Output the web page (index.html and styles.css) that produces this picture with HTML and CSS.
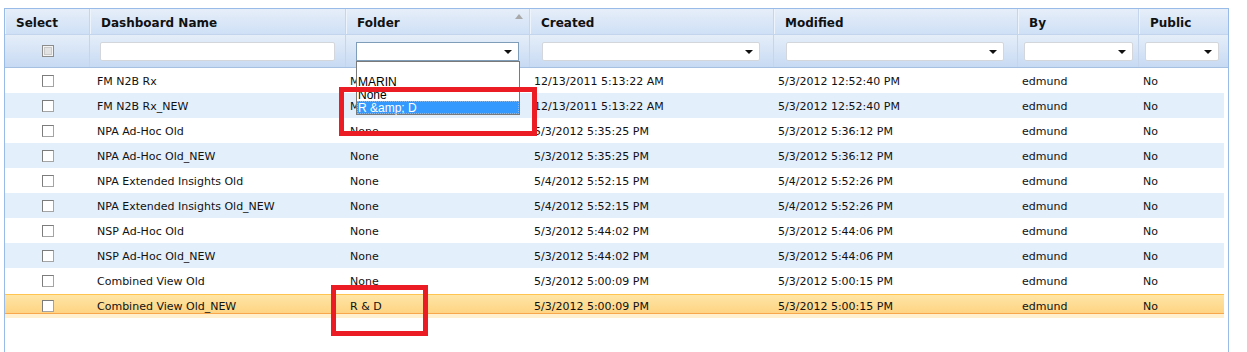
FILE: index.html
```html
<!DOCTYPE html>
<html lang="en">
<head>
    <meta charset="UTF-8">
    <title>Dashboards</title>
    <link rel="stylesheet" href="styles.css">
</head>
<body>
    <div class="grid">
        <div class="grid-head">
            <div class="row head-row">
                <div class="hd">Select</div>
                <div class="hd">Dashboard Name</div>
                <div class="hd">Folder<span class="sort-arrow"></span></div>
                <div class="hd">Created</div>
                <div class="hd">Modified</div>
                <div class="hd">By</div>
                <div class="hd">Public</div>
            </div>
            <div class="row filter-row">
                <div class="ft ft-sel"><span class="chk chk-off"></span></div>
                <div class="ft ft-name"><input class="filter-text" type="text"></div>
                <div class="ft ft-folder"><div class="combo combo-open"><span class="combo-arrow"></span></div></div>
                <div class="ft ft-created"><div class="combo"><span class="combo-arrow"></span></div></div>
                <div class="ft ft-modified"><div class="combo"><span class="combo-arrow"></span></div></div>
                <div class="ft ft-by"><div class="combo"><span class="combo-arrow"></span></div></div>
                <div class="ft ft-public"><div class="combo"><span class="combo-arrow"></span></div></div>
            </div>
        </div>

        <div class="grid-body">
            <div class="row data-row">
                <div class="cell cell-sel"><span class="chk"></span></div>
                <div class="cell cell-name">FM N2B Rx</div>
                <div class="cell">MARIN</div>
                <div class="cell">12/13/2011 5:13:22 AM</div>
                <div class="cell">5/3/2012 12:52:40 PM</div>
                <div class="cell">edmund</div>
                <div class="cell">No</div>
            </div>
            <div class="row data-row alt">
                <div class="cell cell-sel"><span class="chk"></span></div>
                <div class="cell cell-name">FM N2B Rx_NEW</div>
                <div class="cell">MARIN</div>
                <div class="cell">12/13/2011 5:13:22 AM</div>
                <div class="cell">5/3/2012 12:52:40 PM</div>
                <div class="cell">edmund</div>
                <div class="cell">No</div>
            </div>
            <div class="row data-row">
                <div class="cell cell-sel"><span class="chk"></span></div>
                <div class="cell cell-name">NPA Ad-Hoc Old</div>
                <div class="cell">None</div>
                <div class="cell">5/3/2012 5:35:25 PM</div>
                <div class="cell">5/3/2012 5:36:12 PM</div>
                <div class="cell">edmund</div>
                <div class="cell">No</div>
            </div>
            <div class="row data-row alt">
                <div class="cell cell-sel"><span class="chk"></span></div>
                <div class="cell cell-name">NPA Ad-Hoc Old_NEW</div>
                <div class="cell">None</div>
                <div class="cell">5/3/2012 5:35:25 PM</div>
                <div class="cell">5/3/2012 5:36:12 PM</div>
                <div class="cell">edmund</div>
                <div class="cell">No</div>
            </div>
            <div class="row data-row">
                <div class="cell cell-sel"><span class="chk"></span></div>
                <div class="cell cell-name">NPA Extended Insights Old</div>
                <div class="cell">None</div>
                <div class="cell">5/4/2012 5:52:15 PM</div>
                <div class="cell">5/4/2012 5:52:26 PM</div>
                <div class="cell">edmund</div>
                <div class="cell">No</div>
            </div>
            <div class="row data-row alt">
                <div class="cell cell-sel"><span class="chk"></span></div>
                <div class="cell cell-name">NPA Extended Insights Old_NEW</div>
                <div class="cell">None</div>
                <div class="cell">5/4/2012 5:52:15 PM</div>
                <div class="cell">5/4/2012 5:52:26 PM</div>
                <div class="cell">edmund</div>
                <div class="cell">No</div>
            </div>
            <div class="row data-row">
                <div class="cell cell-sel"><span class="chk"></span></div>
                <div class="cell cell-name">NSP Ad-Hoc Old</div>
                <div class="cell">None</div>
                <div class="cell">5/3/2012 5:44:02 PM</div>
                <div class="cell">5/3/2012 5:44:06 PM</div>
                <div class="cell">edmund</div>
                <div class="cell">No</div>
            </div>
            <div class="row data-row alt">
                <div class="cell cell-sel"><span class="chk"></span></div>
                <div class="cell cell-name">NSP Ad-Hoc Old_NEW</div>
                <div class="cell">None</div>
                <div class="cell">5/3/2012 5:44:02 PM</div>
                <div class="cell">5/3/2012 5:44:06 PM</div>
                <div class="cell">edmund</div>
                <div class="cell">No</div>
            </div>
            <div class="row data-row">
                <div class="cell cell-sel"><span class="chk"></span></div>
                <div class="cell cell-name">Combined View Old</div>
                <div class="cell">None</div>
                <div class="cell">5/3/2012 5:00:09 PM</div>
                <div class="cell">5/3/2012 5:00:15 PM</div>
                <div class="cell">edmund</div>
                <div class="cell">No</div>
            </div>
            <div class="row data-row selected">
                <div class="cell cell-sel"><span class="chk"></span></div>
                <div class="cell cell-name">Combined View Old_NEW</div>
                <div class="cell">R &amp; D</div>
                <div class="cell">5/3/2012 5:00:09 PM</div>
                <div class="cell">5/3/2012 5:00:15 PM</div>
                <div class="cell">edmund</div>
                <div class="cell">No</div>
            </div>
        </div>

        <!-- open folder filter list -->
        <ul class="combo-list">
            <li>&nbsp;</li>
            <li>MARIN</li>
            <li>None</li>
            <li class="hot">R &amp;amp; D</li>
        </ul>

        <div class="mark mark-folder"></div>
        <div class="mark mark-rd"></div>
    </div>
</body>
</html>
```

FILE: styles.css
```css
body {
    margin: 0;
    background: #fff;
    font-family: "DejaVu Sans", Verdana, sans-serif;
}

.grid {
    position: relative;
    width: 1223px;
    margin: 8px 0 0 4px;
    border: 1px solid #99bbe8;
    border-bottom: 0;
    height: 360px;
}

.row {
    display: grid;
    grid-template-columns: 85px 256px 184px 244px 244px 121px 89px;
}

.head-row {
    height: 26px;
    background: linear-gradient(#e6eef9, #cfe0f6);
    border-bottom: 1px solid #c3d5ec;
    box-sizing: border-box;
}

.hd {
    display: flex;
    align-items: center;
    padding: 2px 0 0 11px;
    font-size: 12px;
    font-weight: bold;
    color: #111;
    border-right: 1px solid #c5d6ec;
    box-shadow: inset 1px 0 0 #eef4fc;
}

.hd:last-child {
    border-right: 0;
}

.sort-arrow {
    align-self: flex-start;
    margin: 3px 6px 0 auto;
    width: 0;
    height: 0;
    border-left: 4px solid transparent;
    border-right: 4px solid transparent;
    border-bottom: 5px solid #a9a9a9;
}

.filter-row {
    height: 33px;
    background: linear-gradient(#e5eef9, #c7daf3);
    border-bottom: 1px solid #a6c0e1;
    box-sizing: border-box;
}

.ft {
    display: flex;
    align-items: center;
    border-right: 1px solid #c5d6ec;
}

.ft:last-child {
    border-right: 0;
}

.ft-sel {
    justify-content: center;
    padding-left: 1px;
}

.ft-name { padding: 0 10px 0 10px; }
.ft-folder { padding: 0 10px 0 10px; }
.ft-created { padding: 0 13px 0 12px; }
.ft-modified { padding: 0 13px 0 12px; }
.ft-by { padding: 0 5px 0 6px; }
.ft-public { padding: 0 9px 0 6px; }

.filter-text,
.combo {
    box-sizing: border-box;
    width: 100%;
    height: 19px;
    margin: 0;
    border: 1px solid #d3d7dc;
    border-radius: 2px;
    background: #fff;
}

.combo {
    position: relative;
    display: flex;
    align-items: center;
    justify-content: flex-end;
}

.combo-open {
    border-color: #7f9db9;
    border-radius: 0;
}

.combo-arrow {
    width: 0;
    height: 0;
    margin-right: 6px;
    margin-top: 1px;
    border-left: 4px solid transparent;
    border-right: 4px solid transparent;
    border-top: 4px solid #111;
}

.chk {
    display: inline-block;
    box-sizing: border-box;
    width: 12px;
    height: 12px;
    background: #fff;
    border: 1px solid #a4a4a4;
    border-top-color: #7c7c7c;
    border-left-color: #7c7c7c;
}

.chk-off {
    border: 1px solid #8c8c8c;
    background: #e2e2e2;
    box-shadow: inset 0 0 0 1px #f4f4f4, inset 0 0 0 2px #c9c9c9;
}

.grid-body {
    padding-right: 4px;
}

.grid-body .row {
    grid-template-columns: 85px 256px 184px 244px 244px 121px 85px;
}

.data-row {
    height: 25px;
    font-size: 11px;
    color: #111;
}

.data-row.alt {
    background: #e4effc;
}

.data-row.selected {
    background: linear-gradient(#fff 0 1px, #ffc44f 1px 2px, #fee5a6 2px, #fed483 20px, #f8a74b 20px 21px, #fff0cf 21px);
}

.cell {
    padding: 3px 0 0 4px;
    line-height: 22px;
    white-space: nowrap;
    overflow: hidden;
}

.cell-name {
    padding-left: 7px;
}

.cell-sel {
    display: flex;
    align-items: center;
    justify-content: center;
    padding: 1px 0 0 0;
}

.combo-list {
    position: absolute;
    left: 351px;
    top: 52px;
    width: 164px;
    margin: 0;
    padding: 0;
    list-style: none;
    box-sizing: border-box;
    background: #fff;
    border: 1px solid #7a7a7a;
    font-family: "Liberation Sans", Arial, sans-serif;
    font-size: 12px;
    color: #000;
}

.combo-list li {
    height: 13px;
    line-height: 14px;
    padding-left: 1px;
}

.combo-list li.hot {
    background: #3399ff;
    color: #fff;
    outline: 1px dotted #8db8e6;
    outline-offset: -1px;
}

.mark {
    position: absolute;
    box-sizing: border-box;
    border: 5px solid #ec1c24;
}

.mark-folder {
    left: 334px;
    top: 78px;
    width: 198px;
    height: 49px;
}

.mark-rd {
    left: 326px;
    top: 276px;
    width: 97px;
    height: 51px;
}
```
